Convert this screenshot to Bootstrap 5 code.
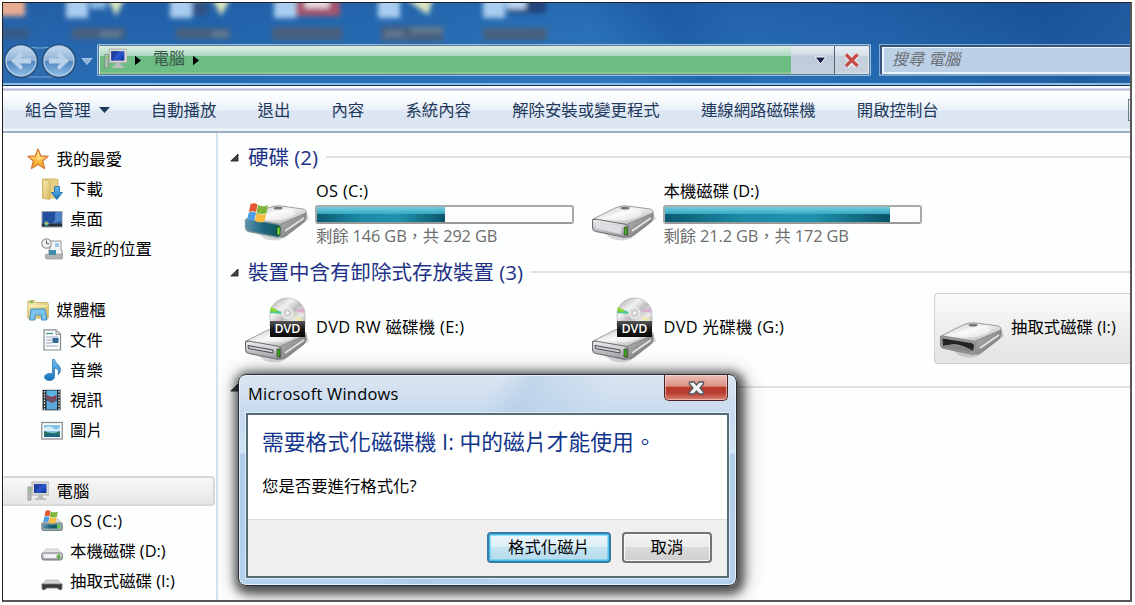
<!DOCTYPE html>
<html lang="zh-Hant">
<head>
<meta charset="utf-8">
<meta name="viewport" content="width=device-width, initial-scale=1">
<title>電腦</title>
<link href="https://cdn.jsdelivr.net/npm/bootstrap@5.3.0/dist/css/bootstrap.min.css" rel="stylesheet">
<style>
  body { font-family: "Open Sans", "Noto Sans CJK TC", sans-serif; font-size: 16.4px; line-height: 20px; color: #000; background: #fff; overflow: hidden; white-space: nowrap; }
  svg { display: block; flex: none; }
  .explorer { width: 1130px; height: 600px; margin: 2px 0 0 2px; border: 1px solid #231f20; border-right: 2px solid #5a5655; border-bottom: 2px solid #5a5655; background: #fdfefe; }
  .lat { letter-spacing: .3px; }

  /* glass title area */
  .glass { height: 83px; background: linear-gradient(180deg, rgba(20,70,150,.25), rgba(45,125,195,.25)), linear-gradient(62deg, #2a67ad 0, #2468ae 20%, #2b72b6 42%, #2d78bb 53%, #1f60a6 60%, #286cb2 66%, #2364aa 78%, #1a5496 92%, #245f9f 100%); border-bottom: 1px solid #153a5e; box-shadow: inset 0 -2px 0 #8ebce0; padding: 41px 0 0 0; }
  .desk-icons { left: 0; top: 0; }
  .navpair { width: 94px; height: 34px; }
  .address { width: 774px; height: 32px; border: 1px solid #9dc0dc; outline: 0; background: #34516e; padding: 1px; border-radius: 1px; box-shadow: inset 0 0 0 1px #587ba0; }
  .addr-fill { width: 692px; background: linear-gradient(180deg, #e0efdf 0, #d3ebdd 8%, #acd9c1 34%, #6ebd85 35%, #6dbc83 92%, #8bc78d 93%); border-left: 1px solid #d9eee0; }
  .addr-text { font-size: 16px; color: #375647; }
  .addr-drop { width: 44px; background: linear-gradient(180deg, #e8eff3 0, #ced9e4 33%, #bccada 35%, #c6cfdc 100%); border-right: 1px solid #54657b; }
  .addr-stop { background: linear-gradient(180deg, #e8eff3 0, #d4dee7 33%, #c4d0dc 35%, #c8d1dc 100%); border: 1px solid #dce6ef; border-left: 0; }
  .search { height: 32px; border: 1px solid #83abd0; border-right: 0; border-bottom: 2px solid #7ca3ca; background: #bcd0e6; box-shadow: inset 0 2px 0 #35557b, inset 2px 0 0 #35557b, inset 0 3px 0 #eef5fb, inset 4px 0 0 #eef5fb, inset 0 -2px 0 #eaf2fa; font-size: 16px; font-style: italic; color: #6a7075; padding: 0 0 2px 12px; }

  .cmdbar { height: 47px; margin-top: 0; border-top: 2px solid #fff; border-bottom: 2px solid #a0aec4; background: linear-gradient(180deg, #d4d6ea 0, #d4d6ea 1px, #a3a9c8 2px, #fff 3px, #f7fafd 30%, #e7eef7 51%, #dde6f3 54%, #dbe5f2 92%, #eef4fb 96%); color: #1e395b; gap: 41.2px; padding: 1px 0 0 22px; }
  .viewbtn { right: 0; top: 11px; width: 2px; height: 22px; border: 1px solid #6c7a8a; border-right: 0; }

  .sidebar { width: 215px; border-right: 2px solid #d3e2f1; padding-top: 10.5px; }
  .navrow { height: 30.2px; gap: 8px; padding-left: 23.5px; }
  .navrow.sub { padding-left: 38px; gap: 7px; }
  .picked { width: 211.5px; border: 2px solid #d8d8d8; border-left: 0; border-radius: 0 4px 4px 0; background: linear-gradient(180deg, #f8f8f8, #e6e6e6); }

  .files { padding: 11px 0 0 12px; }
  .grouphead { height: 26px; font-size: 20.5px; color: #1e3287; }
  .grouphead span { margin: 0 8px 0 9px; padding-bottom: 1px; }
  .grouphead hr { border-top: 2px solid #dfe1e1; opacity: 1; }
  .tiles { padding-left: 8.5px; height: 89px; }
  .tile { width: 347.5px; flex: none; height: 71px; padding-left: 4px; gap: 5.5px; }
  .tile > span { padding-bottom: 4px; }
  .tile.hot { border: 1px solid #d0d0d0; border-radius: 4px 0 0 4px; border-right: 0; background: linear-gradient(180deg, #fafafa, #e3e3e3); width: 197px; padding-left: 3px; }
  .low { margin-top: 4px; }
  .raised { margin-top: -8px; }
  .meter { width: 259px; height: 19px; border: 2px solid #aaa; border-color: #aaa #aaa #999; border-radius: 3px; background: #fdfdfd; margin-left: -1px; }
  .meter-fill { border-radius: 0; background: linear-gradient(180deg, rgba(120,210,228,.95) 0, rgba(55,172,197,.9) 48%, transparent 50%), linear-gradient(90deg, #0a5a72 0, #1d8ca6 35%, #2093ac 65%, #0a5369 100%); }
  .detail { color: #6d6d6d; letter-spacing: -.15px; margin-top: 2px; }

  /* message box */
  .msgbox { left: 235px; top: 371px; width: 499px; height: 212px; border: 1.5px solid #272b31; border-radius: 8px; padding: 0 7px 7px; background: linear-gradient(120deg, transparent 0, transparent 42%, rgba(160,195,225,.4) 48%, transparent 62%), linear-gradient(180deg, #dbe5f1 0, #c6d9ee 20%, #cfe5f5 37%, #b0cdeb 38%, #b5d0ec 100%); box-shadow: inset 0 0 0 1px #e6f3fc, 2px 3px 10px 5px rgba(0,0,0,.6), 3px 3px 22px 4px rgba(0,0,0,.3); z-index: 3; }
  .msgtitle { height: 38px; padding-left: 2px; font-size: 16.4px; letter-spacing: .25px; }
  .closebtn { width: 64px; height: 26px; margin-right: 1px; border: 1.5px solid #4a2226; border-top: 0; border-radius: 0 0 5px 5px; background: linear-gradient(180deg, #ecc0b8 0, #dc9185 45%, #bd3d2c 48%, #b63b30 70%, #d88070 100%); box-shadow: inset 0 0 0 1px rgba(255,225,215,.55); }
  .msgclient { border: 2px solid #586c76; background: #fff; box-shadow: 0 0 0 1px #dceefa; }
  .msgmain { height: 104px; padding: 14px 0 0 14px; }
  .msgmain h1 { font-size: 21.8px; line-height: 26px; color: #12358c; margin: 0 0 21px; font-weight: 400; }
  .msgfoot { background: #efefef; border-top: 1px solid #dcdcdc; gap: 11px; padding: 0 15px 1px 0; }
  .winbtn { height: 31px; width: 90px; border: 2px solid #737373; border-radius: 4px; padding: 0 0 2px; font-size: 16.4px; line-height: 23px; color: #000; background: linear-gradient(180deg, #f2f2f2 0, #ececec 48%, #dadada 50%, #cfcfcf 100%); box-shadow: inset 0 0 0 1px #f8f8f8; }
  .winbtn.primary { width: 124px; border-color: #3a79a6; background: linear-gradient(180deg, #eaf5fa 0, #dff0f8 45%, #c5e4f2 50%, #b4dbed 100%); box-shadow: inset 0 0 0 1.5px #45c3ea; }
</style>
</head>
<body>

<svg width="0" height="0" class="position-absolute" aria-hidden="true">
  <defs>
    <linearGradient id="silver" x1="0" y1="0" x2="1" y2="1"><stop offset="0" stop-color="#c4c4c4"/><stop offset=".45" stop-color="#f6f6f6"/><stop offset="1" stop-color="#a0a0a0"/></linearGradient>
    <linearGradient id="side" x1="0" y1="0" x2="1" y2="1"><stop offset="0" stop-color="#bdbdbd"/><stop offset="1" stop-color="#676767"/></linearGradient>
    <linearGradient id="front" x1="0" y1="0" x2="0" y2="1"><stop offset="0" stop-color="#f0f0f4"/><stop offset="1" stop-color="#9b9ba2"/></linearGradient>
    <linearGradient id="teal" x1="0" y1="0" x2="1" y2="0"><stop offset="0" stop-color="#5c93ab"/><stop offset=".5" stop-color="#1d6480"/><stop offset="1" stop-color="#0e5955"/></linearGradient>
    <linearGradient id="screen" x1="0" y1="0" x2="1" y2="1"><stop offset="0" stop-color="#0f2d96"/><stop offset=".5" stop-color="#2b57cc"/><stop offset="1" stop-color="#10309c"/></linearGradient>
    <linearGradient id="gold" x1="0" y1="0" x2="1" y2="1"><stop offset="0" stop-color="#f8efb8"/><stop offset="1" stop-color="#d5b75a"/></linearGradient>
    <linearGradient id="orange" x1="0" y1="0" x2="0" y2="1"><stop offset="0" stop-color="#ffe27a"/><stop offset="1" stop-color="#f5a01c"/></linearGradient>
    <linearGradient id="blue" x1="0" y1="0" x2="0" y2="1"><stop offset="0" stop-color="#6cc0ee"/><stop offset="1" stop-color="#1672bd"/></linearGradient>
    <linearGradient id="orb" x1="0" y1="0" x2="0" y2="1"><stop offset="0" stop-color="#c4d8ec"/><stop offset=".48" stop-color="#8fb2d6"/><stop offset=".52" stop-color="#5288c0"/><stop offset="1" stop-color="#8dbce6"/></linearGradient>
    <linearGradient id="disc" x1="0" y1="0" x2="1" y2="1"><stop offset="0" stop-color="#9c9c9c"/><stop offset=".35" stop-color="#f2f2f2"/><stop offset=".55" stop-color="#bcbcbc"/><stop offset=".75" stop-color="#ececec"/><stop offset="1" stop-color="#a2a2a2"/></linearGradient>
    <linearGradient id="label" x1="0" y1="0" x2="0" y2="1"><stop offset="0" stop-color="#565656"/><stop offset=".5" stop-color="#1b1b1b"/><stop offset="1" stop-color="#0a0a0a"/></linearGradient>

    <g id="drive-body">
      <path d="M3 50 L22 65 Q36 69 44 62 L66 45 L64 40Z" fill="#777" opacity=".3"/>
      <path d="M3 45 L25 34 Q31 31 38 32 L60 35 Q64 36 63 40 L43 49 Q38 51 33 50 L5 48 Q2 47 3 45Z" fill="url(#silver)" stroke="#929292" stroke-width=".9"/>
      <path d="M20 43 Q28 36 43 36 Q53 36 52 40 Q44 47 31 46 Q18 46 20 43Z" fill="#fff" opacity=".5"/>
      <path d="M38 50 L63 39 Q64 45 61 48 L44 61 Q40 64 37 63Z" fill="url(#side)" stroke="#777" stroke-width=".7"/>
      <path d="M42 57 L61 44" stroke="#e4e4e4" stroke-width="1.6"/>
      <ellipse cx="35" cy="34.2" rx="4.5" ry="1.4" fill="#777"/>
    </g>
    <symbol id="drive" viewBox="0 0 68 68">
      <use href="#drive-body"/>
      <path d="M2.500 46 Q4 44.500 8 45.500 L34 50 Q38 51 38 54 L37.500 61 Q37 64 33 63 L6 57.500 Q2.500 56.500 2.500 53Z" fill="url(#front)" stroke="#6e6e6e" stroke-width="1.1"/>
      <path d="M5.500 48.500 L31 52.500 V60 L6 54.500Z" fill="#dddde4"/>
      <path d="M34.200 53 h3 v8 h-3z" fill="#45ad23" stroke="#263c1b" stroke-width=".7"/>
    </symbol>
    <symbol id="flag" viewBox="0 0 22 20">
      <path d="M4 1 Q8 -.5 11 1.500 L9.500 9 Q6 7.500 2.500 9Z" fill="#e5562f"/>
      <path d="M11.500 2 Q17 4.500 21.500 2 L20 10 Q15 12 10 9.500Z" fill="#80b63c"/>
      <path d="M2.200 9.700 Q6 8 9.400 9.700 L7.700 17.500 Q4 15.800 .5 17.500Z" fill="#4b9fe4"/>
      <path d="M10 10.300 Q15 12.800 19.800 10.800 L18 18.500 Q13 20.500 8.200 17.800Z" fill="#f8bd3e"/>
    </symbol>
    <symbol id="drive-os" viewBox="0 0 68 68">
      <use href="#drive-body"/>
      <path d="M2.500 46 Q4 44.500 8 45.500 L34 50 Q38 51 38 54 L37.500 61 Q37 64 33 63 L6 57.500 Q2.500 56.500 2.500 53Z" fill="url(#teal)" stroke="#80949b" stroke-width="1.3"/>
      <path d="M34 53 h3 v8 h-3z" fill="#7bdc35" stroke="#163c1b" stroke-width=".7"/>
      <use href="#flag" x="3" y="29" width="23" height="20"/>
    </symbol>
    <symbol id="drive-dvd" viewBox="0 0 68 68">
      <use href="#drive-body"/>
      <path d="M2.500 46 Q4 44.500 8 45.500 L34 50 Q38 51 38 54 L37.500 61 Q37 64 33 63 L6 57.500 Q2.500 56.500 2.500 53Z" fill="url(#front)" stroke="#6e6e6e" stroke-width="1.1"/>
      <path d="M5 49.500 L30 54 v3 L5.500 52.500Z" fill="#cfcfd3" stroke="#4d4d4d" stroke-width="1"/>
      <path d="M34 53 h3 v8 h-3z" fill="#45ad23" stroke="#263c1b" stroke-width=".7"/>
      <path d="M27 30 V18 A17.500 16 0 0 1 62 18 V30Z" fill="url(#disc)" stroke="#b4b4b4" stroke-width=".7"/>
      <path d="M28 12 L39 16 L38 18 L27 17Z" fill="#52c78f"/><path d="M28 11 L34 14 L33 16 L27 15Z" fill="#8cd52f"/>
      <path d="M50 15 L61 12 L62 17Z" fill="#d9afcf"/><path d="M50 20 L60 23 L58 27Z" fill="#efe9a8"/><path d="M39 21 L30 27 L35 28Z" fill="#dcb6d4"/>
      <circle cx="44.500" cy="17" r="5.500" fill="#d8d8d8" stroke="#f7f7f7"/><circle cx="44.500" cy="17" r="2" fill="#fff" stroke="#aaa" stroke-width=".6"/>
      <rect x="27" y="25" width="35" height="16" fill="url(#label)"/>
      <text x="44.500" y="37.300" text-anchor="middle" font-family="Open Sans, sans-serif" font-size="12.500" font-weight="600" fill="#fff" textLength="26" lengthAdjust="spacingAndGlyphs">DVD</text>
    </symbol>
    <symbol id="drive-usb" viewBox="0 0 68 68">
      <use href="#drive-body"/>
      <path d="M2.500 46 Q4 44.500 8 45.500 L34 50 Q38 51 38 54 L37.500 61 Q37 64 33 63 L6 57.500 Q2.500 56.500 2.500 53Z" fill="#9a9a9a" stroke="#878787" stroke-width="1.1"/>
      <path d="M4.500 47.500 L33 52 Q36 52.500 36 55 L35 60 Q25 54 16 53 L5 55Z" fill="#242424"/>
      <path d="M5 55 Q18 51 34 60 L33 61.500 L6 56.500Z" fill="#858585"/>
    </symbol>

    <symbol id="pc" viewBox="0 0 22 22">
      <rect x="5" y="2" width="17" height="13" fill="#dcdad3" stroke="#aaa9a5" stroke-width=".8"/><rect x="7" y="4" width="12.500" height="9" fill="url(#screen)"/><path d="M7 4h6l-4 9H7z" fill="#2140a4"/>
      <path d="M11 15h5v3h3v2H8v-2h3z" fill="#bdbdbd"/><rect x="1" y="7" width="3" height="13" fill="#b9c3be" stroke="#7d8781" stroke-width=".7"/><path d="M1.800 9h1.500v2H1.800z" fill="#6ed033"/>
    </symbol>
    <symbol id="star" viewBox="0 0 22 22"><path d="M11 1 L13.800 8 L21.200 8.300 L15.600 13 L17.600 20.500 L11 16.500 L4.400 20.500 L6.400 13 L.8 8.300 L8.200 8Z" fill="url(#orange)" stroke="#d77b3d" stroke-width="1.3" stroke-linejoin="round"/><path d="M11 4l1.800 5.200 4.600.3-7 3z" fill="#fff3b0" opacity=".6"/></symbol>
    <symbol id="download" viewBox="0 0 22 22"><path d="M1.500 1h14q1.500 0 1.500 1.500V20H1.500z" fill="#e6d184" stroke="#c6a956" stroke-width=".8"/><path d="M2 1.500l7 1.500v18.500l-7-1z" fill="url(#gold)" stroke="#c7ad5e" stroke-width=".6"/><path d="M13.500 8.500h5v6h3l-5.600 7-5.600-7h3.200z" fill="url(#blue)" stroke="#1c69a9" stroke-width=".8"/></symbol>
    <symbol id="desktop" viewBox="0 0 22 22"><rect x=".5" y="3" width="21" height="16.500" fill="#9ba1ab"/><rect x="1.500" y="4" width="19" height="11.500" fill="#244f9e"/><path d="M20.500 4v9L11 15.500C17 12 12 6 15 4z" fill="#4d83c9"/><rect x="1" y="15.500" width="20" height="3" fill="#27313c"/><circle cx="5.500" cy="15.500" r="2.300" fill="#53b6a0"/><path d="M4.500 14.500h2V16h-2z" fill="#e5c045"/></symbol>
    <symbol id="recent" viewBox="0 0 22 22"><path d="M9 3h11v9h1v8H8v-9h1z" fill="#f4f4f4" stroke="#949494"/><path d="M14 5h4v4h-4z" fill="#9bc8e6"/><path d="M6 16h16l-1 5H5l-1-4z" fill="#b5b5b5" stroke="#8f8f8f" stroke-width=".6"/><path d="M8 12h7v5H8z" fill="#3f8fad"/><circle cx="5.500" cy="5.500" r="4.700" fill="#f2f2f2" stroke="#989898" stroke-width="1.200"/><path d="M5.500 2.500v3.200H8" stroke="#555" fill="none"/></symbol>
    <symbol id="library" viewBox="0 0 22 22"><path d="M.8 3q0-1.500 1.500-1.500h5l2 2h10.500q1.500 0 1.500 1.500v14H.8z" fill="url(#gold)" stroke="#c5a952" stroke-width=".8"/><path d="M2.500 3.200h4" stroke="#55a943" stroke-width="1.500"/><path d="M1 7h20" stroke="#fff7c5"/><path d="M4 10h14l2 11h-5.500v-5H8v5H2.500z" fill="#7cc3e9" stroke="#3b88bb" stroke-width=".9"/></symbol>
    <symbol id="doc" viewBox="0 0 22 22"><path d="M3 .8h12L19.500 5v16H3z" fill="#fbfbfb" stroke="#858b8b" stroke-width="1.200"/><path d="M15 1v4.500h4" fill="#ddd" stroke="#858b8b" stroke-width=".8"/><path d="M5 4.500h7" stroke="#3d9c95" stroke-width="1.300"/><path d="M5 8h12M5 11h6M5 14h6M5 17h12" stroke="#9aa4c2" stroke-width="1.100"/><path d="M11.500 9h6v5h-6z" fill="#2e6997"/></symbol>
    <symbol id="music" viewBox="0 0 22 22"><path d="M11.500.5h2c.5 4 6 5.500 6 10 0 3-2 5-2.500 5 1.500-4-.5-6-3.500-6.500v8.500c0 3-2.500 4-5 4s-5-1.500-5-3.500S6 14 11.500 14.500z" fill="url(#blue)" stroke="#226fa9" stroke-width=".7"/></symbol>
    <symbol id="video" viewBox="0 0 22 22"><rect x="1.500" y=".8" width="18" height="20.500" fill="#252c31"/><rect x="5.500" y="1.500" width="10.500" height="9" fill="#5cb4e3"/><rect x="5.500" y="11.500" width="10.500" height="9" fill="#5aaadf"/><path d="M5.500 6l5 2 5-2v4.500h-10zM5.500 11.500h10.500l-5 2.500z" fill="#87414e"/><path d="M3.500 2v19M18 2v19" stroke="#e9efef" stroke-width="1.300" stroke-dasharray="1.500 1.400"/></symbol>
    <symbol id="picture" viewBox="0 0 22 22"><rect x=".8" y="3.500" width="20.500" height="16.500" fill="#fbfbfb" stroke="#8b9296" stroke-width="1.300"/><rect x="3" y="6" width="16" height="12" fill="#83c5ea"/><path d="M3 9q5-3 9 0t7-1v4H3z" fill="#d7edf4"/><path d="M3 12q6 2 9 2t7-2v6H3z" fill="#2a7660"/><path d="M3 15.500q8-1 16 0V18H3z" fill="#1d6687"/></symbol>
    <symbol id="hdd-s" viewBox="0 0 22 22"><path d="M5 9h12l4.500 5h-21z" fill="#e6e6e6" stroke="#b5b5b5" stroke-width=".6"/><rect x=".8" y="13" width="20.500" height="7" rx="2" fill="url(#front)" stroke="#777"/><rect x="3" y="14.500" width="12" height="3.500" fill="#f3f3fa"/><rect x="16.500" y="14.500" width="2.500" height="4" fill="#4caf2e"/></symbol>
    <symbol id="os-s" viewBox="0 0 22 22"><path d="M5 9h12l4.500 5h-21z" fill="#ddd" stroke="#aaa" stroke-width=".6"/><rect x=".8" y="13" width="20.500" height="7.500" rx="1.500" fill="#96a9ac" stroke="#748084"/><rect x="2" y="14.500" width="14" height="4" fill="url(#teal)"/><rect x="16.500" y="14.500" width="2.500" height="4" fill="#5acb3a"/><use href="#flag" x="1.500" y="0" width="16" height="14"/></symbol>
    <symbol id="usb-s" viewBox="0 0 22 22"><path d="M5 10h12l4.500 5h-21z" fill="#d5d5d5" stroke="#aaa" stroke-width=".6"/><path d="M1 14h20v4q0 2-2 2l-3-2H6l-3 2q-2 0-2-2z" fill="#3a3a3a" stroke="#777" stroke-width=".8"/></symbol>
    <symbol id="expander" viewBox="0 0 9 9"><path d="M8 1v7H.8z" fill="#444" stroke="#222" stroke-width=".9"/></symbol>
  </defs>
</svg>

<div class="explorer position-relative overflow-hidden d-flex flex-column">
  <header class="glass position-relative d-flex align-items-start flex-shrink-0">
    <svg class="desk-icons position-absolute" width="600" height="46" viewBox="3 3 600 46">
      <defs><filter id="soft" x="-10%" y="-30%" width="120%" height="160%"><feGaussianBlur stdDeviation="2.700"/></filter></defs>
      <g filter="url(#soft)">
        <path d="M-5 -6h30v22H-5z" fill="#e8ac90"/><path d="M-5 28h34v11H-5z" fill="#345c86"/>
        <g fill="#a9cdef"><path d="M66 -6h22v24H66zM170 -6h22v24h-22zM274 -6h22v24h-22zM378 -6h22v24h-22zM483 -6h22v24h-22z"/></g>
        <path d="M90 -4h16v13H90zM194 -4h14v13h-14z" fill="#87b8e3"/>
        <path d="M106 -4h20l-10 20zM211 -4h21l-11 20zM402 -4h32l-6 19z" fill="#dce7c0"/>
        <path d="M193 0h15v15h-15z" fill="#315284"/>
        <path d="M296 -4h44v20h-44z" fill="#a5556d"/><path d="M305 -4h24v12h-24z" fill="#eadde0"/>
        <path d="M508 -4h38v17h-38z" fill="#24427c"/><path d="M506 -4h20v13h-20z" fill="#b9d4f0"/>
        <g fill="#49617e"><path d="M72 28h53v11H72zM176 28h54v11h-54zM272 27h70v13h-70zM381 26h62v15h-62zM483 28h64v12h-64z"/></g>
        <path d="M411 30h32M385 34h18M212 34h16M100 34h20" stroke="#7890a6" stroke-width="6" opacity=".55"/>
      </g>
    </svg>
    <div class="navpair position-relative">
      <svg width="94" height="37" viewBox="0 0 94 37">
        <path d="M17 1 Q37 7 57 1 A17 17 0 0 1 57 33 H17 A17 17 0 0 1 17 1Z" fill="#2e6cae" stroke="#79a6cf" stroke-width="1.200"/>
        <g stroke="#244e7d" stroke-width="3.500" fill="none"><circle cx="18" cy="17" r="15.500"/><circle cx="56" cy="17" r="15.500"/></g>
        <g fill="url(#orb)" stroke="#b5cfe8" stroke-width="1.400"><circle cx="18" cy="17" r="15"/><circle cx="56" cy="17" r="15"/></g>
        <path d="M18 8 L8 17 L18 26 L20 22.500 L16.500 19.500 H28 V14.500 H16.500 L20 11.500Z" fill="#b9d1e9"/>
        <path d="M56 8 L66 17 L56 26 L54 22.500 L57.500 19.500 H46 V14.500 H57.500 L54 11.500Z" fill="#b9d1e9"/>
        <path d="M79 14.500h10l-5 6z" fill="#8fb3d8" stroke="#a9c6e2"/>
      </svg>
    </div>
    <div class="address d-flex">
      <div class="addr-fill d-flex align-items-center">
        <svg width="23" height="23" viewBox="0 0 22 22" class="ms-1" style="margin-top:-3px"><use href="#pc"/></svg>
        <svg width="6" height="11" viewBox="0 0 7 11" class="mx-2"><path d="M0 0l7 5.500L0 11z"/></svg>
        <span class="addr-text ps-1 pb-1">電腦</span>
        <svg width="6" height="11" viewBox="0 0 7 11" class="ms-2 me-1"><path d="M0 0l7 5.500L0 11z"/></svg>
      </div>
      <div class="addr-drop d-flex align-items-center justify-content-center ps-3">
        <svg width="13" height="9" viewBox="0 0 13 9"><path d="M1 1h11L6.500 8z" fill="#15214c" stroke="#fff"/></svg>
      </div>
      <div class="addr-stop d-flex flex-grow-1 align-items-center justify-content-center">
        <svg width="18" height="18" viewBox="0 0 18 18"><path d="M3.500 4L14 15M14 4L3.500 15" stroke="#f7eeee" stroke-width="5.500"/><path d="M3 3.500L14.500 15M14.500 3.500L3 15" stroke="#c24c49" stroke-width="3.300"/></svg>
      </div>
    </div>
    <div class="search ms-2 flex-grow-1 d-flex align-items-center">搜尋 電腦</div>
  </header>

  <nav class="cmdbar position-relative d-flex align-items-center flex-shrink-0">
    <span class="d-flex align-items-center gap-2">組合管理<svg width="11" height="6" viewBox="0 0 11 6"><path d="M0 0h11L5.500 6z" fill="#1e395b"/></svg></span>
    <span>自動播放</span><span>退出</span><span>內容</span><span>系統內容</span><span>解除安裝或變更程式</span><span>連線網路磁碟機</span><span>開啟控制台</span>
    <i class="viewbtn position-absolute"></i>
  </nav>

  <div class="d-flex flex-grow-1" style="min-height:0">
    <aside class="sidebar flex-shrink-0">
      <div class="navrow d-flex align-items-center"><svg width="22" height="22"><use href="#star"/></svg>我的最愛</div>
      <div class="navrow sub d-flex align-items-center"><svg width="22" height="22"><use href="#download"/></svg>下載</div>
      <div class="navrow sub d-flex align-items-center"><svg width="22" height="22"><use href="#desktop"/></svg>桌面</div>
      <div class="navrow sub d-flex align-items-center"><svg width="22" height="22"><use href="#recent"/></svg>最近的位置</div>
      <div class="navrow"></div>
      <div class="navrow d-flex align-items-center"><svg width="22" height="22"><use href="#library"/></svg>媒體櫃</div>
      <div class="navrow sub d-flex align-items-center"><svg width="22" height="22"><use href="#doc"/></svg>文件</div>
      <div class="navrow sub d-flex align-items-center"><svg width="22" height="22"><use href="#music"/></svg>音樂</div>
      <div class="navrow sub d-flex align-items-center"><svg width="22" height="22"><use href="#video"/></svg>視訊</div>
      <div class="navrow sub d-flex align-items-center"><svg width="22" height="22"><use href="#picture"/></svg>圖片</div>
      <div class="navrow"></div>
      <div class="navrow picked d-flex align-items-center"><svg width="22" height="22"><use href="#pc"/></svg>電腦</div>
      <div class="navrow sub d-flex align-items-center"><svg width="22" height="22"><use href="#os-s"/></svg><span class="lat">OS (C:)</span></div>
      <div class="navrow sub d-flex align-items-center"><svg width="22" height="22"><use href="#hdd-s"/></svg><span>本機磁碟 (D:)</span></div>
      <div class="navrow sub d-flex align-items-center"><svg width="22" height="22"><use href="#usb-s"/></svg><span>抽取式磁碟 (I:)</span></div>
    </aside>

    <main class="files flex-grow-1 overflow-hidden">
      <div class="grouphead d-flex align-items-center"><svg width="9" height="9"><use href="#expander"/></svg><span>硬碟 (2)</span><hr class="flex-grow-1 my-0"></div>
      <div class="tiles d-flex">
        <div class="tile d-flex">
          <svg width="68" height="68" class="low"><use href="#drive-os"/></svg>
          <div style="padding-top:11px"><div class="lat">OS (C:)</div><div class="meter d-flex mt-1"><div class="meter-fill" style="width:50%"></div></div><div class="detail">剩餘 146 GB，共 292 GB</div></div>
        </div>
        <div class="tile d-flex">
          <svg width="68" height="68" class="low"><use href="#drive"/></svg>
          <div style="padding-top:11px"><div>本機磁碟 (D:)</div><div class="meter d-flex mt-1"><div class="meter-fill" style="width:88.500%"></div></div><div class="detail">剩餘 21.2 GB，共 172 GB</div></div>
        </div>
      </div>
      <div class="grouphead d-flex align-items-center"><svg width="9" height="9"><use href="#expander"/></svg><span>裝置中含有卸除式存放裝置 (3)</span><hr class="flex-grow-1 my-0"></div>
      <div class="tiles d-flex" style="padding-top:8px">
        <div class="tile d-flex align-items-center"><svg width="68" height="68" viewBox="0 -1 68 68"><use href="#drive-dvd" width="68" height="68"/></svg><span class="lat">DVD RW 磁碟機 (E:)</span></div>
        <div class="tile d-flex align-items-center"><svg width="68" height="68" viewBox="0 -1 68 68"><use href="#drive-dvd" width="68" height="68"/></svg><span class="lat">DVD 光碟機 (G:)</span></div>
        <div class="tile hot d-flex align-items-center"><svg width="68" height="68" class="raised"><use href="#drive-usb"/></svg><span>抽取式磁碟 (I:)</span></div>
      </div>
      <div class="grouphead d-flex align-items-center"><svg width="9" height="9"><use href="#expander"/></svg><hr class="flex-grow-1 my-0 ms-2"></div>
    </main>
  </div>

  <section class="msgbox position-absolute d-flex flex-column" role="dialog">
    <div class="msgtitle d-flex justify-content-between"><span class="align-self-center">Microsoft Windows</span>
      <span class="closebtn d-flex align-items-center justify-content-center"><svg width="17" height="14" viewBox="0 0 17 14"><path d="M1.500 1h4.500l2.500 3 2.500-3h4.500v2l-3.500 4 3.500 4v2H11l-2.500-3L6 13H1.500v-2L5 7 1.500 3z" fill="#f5f5f5" stroke="#52575f" stroke-width="1.300"/></svg></span>
    </div>
    <div class="msgclient d-flex flex-column flex-grow-1">
      <div class="msgmain"><h1>需要格式化磁碟機 I: 中的磁片才能使用。</h1><div>您是否要進行格式化?</div></div>
      <div class="msgfoot d-flex flex-grow-1 align-items-center justify-content-end">
        <button class="btn winbtn primary">格式化磁片</button><button class="btn winbtn">取消</button>
      </div>
    </div>
  </section>
</div>

<script src="https://cdn.jsdelivr.net/npm/bootstrap@5.3.0/dist/js/bootstrap.bundle.min.js"></script>
</body>
</html>
